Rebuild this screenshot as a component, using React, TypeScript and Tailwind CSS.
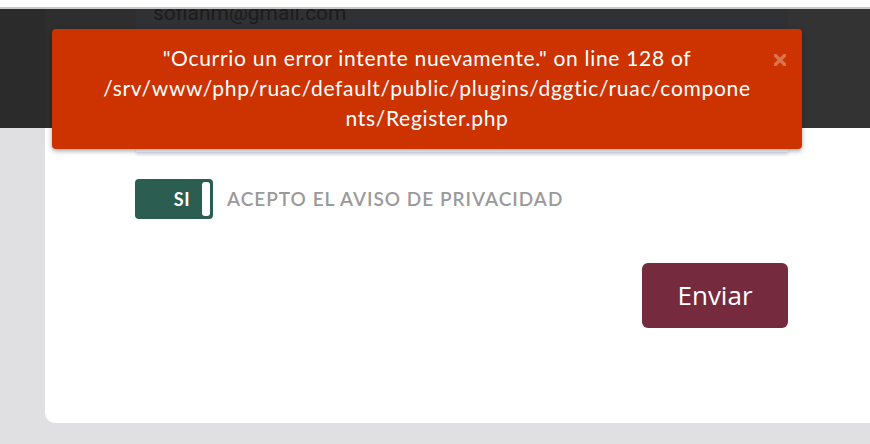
import React from 'react';

const raleway = '"Lato", "Noto Sans", sans-serif';

function ErrorAlert() {
  return (
    <div
      className="absolute left-[52px] top-[29px] w-[750px] h-[120px] rounded-[4px] bg-[#cc3300] shadow-[0_2px_5px_rgba(0,0,0,0.35)] text-white"
      style={{ fontFamily: raleway }}
    >
      <div className="pt-[14px] text-center text-[21px] leading-[30px] tracking-[0.7px]">
        <div>"Ocurrio un error intente nuevamente." on line 128 of</div>
        <div>/srv/www/php/ruac/default/public/plugins/dggtic/ruac/compone</div>
        <div>nts/Register.php</div>
      </div>
      <svg className="absolute right-[16px] top-[25px]" width="12" height="12" viewBox="0 0 12 12">
        <path d="M1.5 1.5 L10.5 10.5 M10.5 1.5 L1.5 10.5" stroke="rgba(255,255,255,0.32)" strokeWidth="3.2" strokeLinecap="round" />
      </svg>
    </div>
  );
}

export default function App() {
  return (
    <div className="relative w-[870px] h-[444px] overflow-hidden bg-[#e0dfe1]">
      <div className="h-[7px] bg-white" />
      <div className="h-[2px] bg-[#c9c9c7]" />

      {/* darkened header area */}
      <div className="flex h-[119px] overflow-hidden">
        <div className="w-[45px] bg-[#2b2b2b]" />
        <div className="w-[91px] bg-[#2e2e2f]" />
        <div className="w-[652px] bg-[#303134] pl-[17px]">
          <div
            className="-mt-[6px] text-[21px] leading-[21px] text-[#1c1c1c]"
            style={{ fontFamily: '"Roboto", "Liberation Sans", sans-serif' }}
          >
            sofianm@gmail.com
          </div>
        </div>
        <div className="flex-1 bg-[#333333]" />
      </div>

      {/* form card */}
      <div className="ml-[45px] h-[295px] rounded-bl-[10px] bg-white">
        <div className="ml-[91px] w-[652px] h-[24px] bg-white shadow-[0_3px_3px_#dfe3f0]" />

        <div className="mt-[27px] ml-[90px] flex items-center gap-[14px]" style={{ fontFamily: raleway }}>
          <div className="flex h-[40px] w-[78px] items-center justify-end rounded-[4px] bg-[#2b5e50] pr-[3px]">
            <span className="mr-[12px] text-[18px] font-bold tracking-[0.5px] text-white">SI</span>
            <span className="h-[34px] w-[8px] rounded-[3px] bg-white" />
          </div>
          <span className="text-[19px] font-semibold tracking-[1px] text-[#9a9a9a]">ACEPTO EL AVISO DE PRIVACIDAD</span>
        </div>

        <div className="mt-[44px] flex justify-end pr-[82px]">
          <button
            className="h-[65px] w-[146px] rounded-[6px] bg-[#762a3e] text-[26px] text-white"
            style={{ fontFamily: '"Open Sans", "Noto Sans", sans-serif' }}
          >
            Enviar
          </button>
        </div>
      </div>

      <ErrorAlert />
    </div>
  );
}
